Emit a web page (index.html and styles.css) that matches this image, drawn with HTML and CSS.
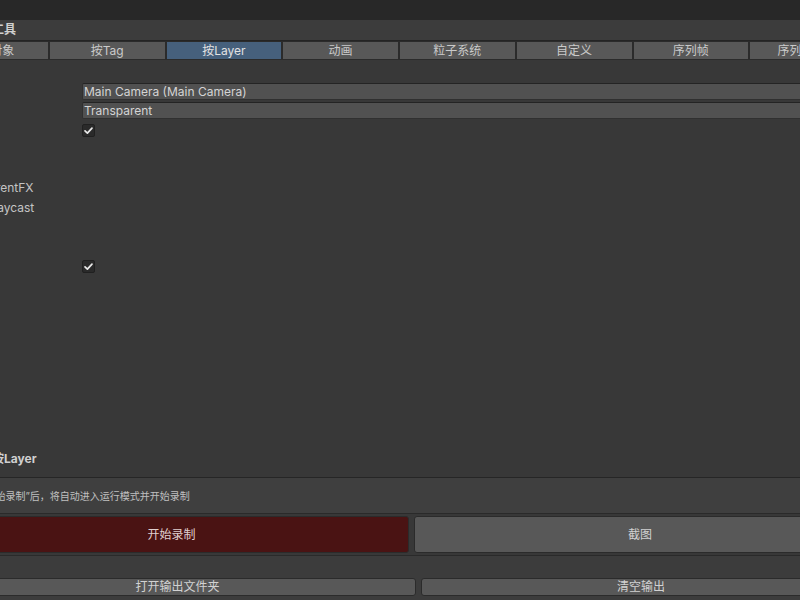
FILE: index.html
```html
<!DOCTYPE html>
<html lang="zh-CN">
<head>
<meta charset="utf-8">
<title>动画录制工具</title>
<link rel="stylesheet" href="styles.css">
</head>
<body>
<div class="window">
  <div class="topbar"></div>
  <div class="header">动画录制工具</div>
  <div class="tabs">
    <div class="tab">指定对象</div>
    <div class="tab">按Tag</div>
    <div class="tab active">按Layer</div>
    <div class="tab">动画</div>
    <div class="tab">粒子系统</div>
    <div class="tab">自定义</div>
    <div class="tab">序列帧</div>
    <div class="tab">序列帧导出</div>
  </div>
  <div class="main">
    <div class="row field-row">
      <span class="label">录制相机</span>
      <div class="field">Main Camera (Main Camera)</div>
    </div>
    <div class="row field-row">
      <span class="label">背景</span>
      <div class="field">Transparent</div>
    </div>
    <div class="row toggle-row">
      <span class="label">递归</span>
      <span class="checkbox"><svg viewBox="0 0 13 13" width="13" height="13"><polyline points="3,6.8 5.4,9.2 10,4.2" fill="none" stroke="#e8e8e8" stroke-width="1.7" stroke-linecap="round" stroke-linejoin="round"/></svg></span>
    </div>
    <div class="layers">
      <div class="layer">Default</div>
      <div class="layer">TransparentFX</div>
      <div class="layer">Ignore Raycast</div>
      <div class="layer">Water</div>
      <div class="layer">UI</div>
    </div>
    <div class="row toggle-row last">
      <span class="label">全选</span>
      <span class="checkbox"><svg viewBox="0 0 13 13" width="13" height="13"><polyline points="3,6.8 5.4,9.2 10,4.2" fill="none" stroke="#e8e8e8" stroke-width="1.7" stroke-linecap="round" stroke-linejoin="round"/></svg></span>
    </div>
    <div class="mode">模式：按Layer</div>
  </div>
  <div class="help">点击“开始录制”后，将自动进入运行模式并开始录制</div>
  <div class="actions">
    <div class="btn big record">开始录制</div>
    <div class="btn big shot">截图</div>
  </div>
  <div class="footer">
    <div class="btn small open">打开输出文件夹</div>
    <div class="btn small clear">清空输出</div>
  </div>
</div>
</body>
</html>
```

FILE: styles.css
```css
html, body {
  margin: 0;
  padding: 0;
  width: 800px;
  height: 600px;
  overflow: hidden;
  background: #383838;
}

.window {
  width: 934px;
  height: 600px;
  margin-left: -67px;
  display: flex;
  flex-direction: column;
  font-family: Inter, "Noto Sans CJK SC", sans-serif;
  font-size: 12px;
  color: #c4c4c4;
  background: #383838;
}

.topbar {
  height: 20px;
  flex: none;
  background: #282828;
}

.header {
  height: 20px;
  flex: none;
  line-height: 20px;
  padding-left: 11px;
  background: #3c3c3c;
  font-weight: bold;
  color: #d0d0d0;
}

.tabs {
  height: 20px;
  flex: none;
  box-sizing: border-box;
  border-top: 1px solid #242424;
  display: flex;
  margin-left: -1px;
  margin-right: 1px;
  background: #2c2c2c;
}

.tab {
  flex: 1;
  height: 19px;
  box-sizing: border-box;
  border: 1px solid #2b2b2b;
  background: #585858;
  text-align: center;
  line-height: 17px;
  color: #cacaca;
  white-space: nowrap;
}

.tab.active {
  background: #46607c;
  color: #e2e2e2;
}

.main {
  flex: none;
  height: 417px;
  box-sizing: border-box;
  padding-top: 23px;
  display: flex;
  flex-direction: column;
}

.row {
  display: flex;
  align-items: center;
}

.label {
  width: 132px;
  padding-left: 17px;
  flex: none;
  white-space: nowrap;
}

.field-row {
  height: 17px;
  margin-bottom: 2px;
}

.field {
  flex: 1;
  height: 17px;
  box-sizing: border-box;
  margin-right: 4px;
  border: 1px solid #303030;
  border-top-color: #242424;
  border-radius: 2px;
  background: #515151;
  color: #d4d4d4;
  line-height: 15px;
  padding-left: 1px;
}

.toggle-row {
  height: 18px;
}

.toggle-row.last {
  height: 16px;
}

.checkbox {
  width: 13px;
  height: 13px;
  box-sizing: border-box;
  border: 1px solid #202020;
  border-radius: 2px;
  background: #2a2a2a;
  display: flex;
  align-items: center;
  justify-content: center;
}

.checkbox svg {
  display: block;
  flex: none;
}

.layers {
  margin-top: 19px;
  padding-left: 17px;
}

.layer {
  height: 20px;
  line-height: 20px;
  white-space: nowrap;
}

.mode {
  margin-top: auto;
  height: 20px;
  line-height: 20px;
  margin-bottom: 8px;
  padding-left: 23px;
  font-weight: bold;
  color: #d0d0d0;
}

.help {
  flex: none;
  height: 37px;
  box-sizing: border-box;
  border-top: 1px solid #262626;
  border-bottom: 1px solid #2a2a2a;
  background: #3f3f3f;
  font-size: 10px;
  line-height: 36px;
  padding-left: 28px;
  color: #c0c0c0;
  white-space: nowrap;
}

.actions {
  flex: none;
  display: flex;
  gap: 5px;
  padding: 2px 1px 2px 1px;
  border-bottom: 1px solid #2a2a2a;
}

.btn {
  box-sizing: border-box;
  border: 1px solid #2b2b2b;
  border-radius: 3px;
  background: #585858;
  color: #d2d2d2;
  text-align: center;
  white-space: nowrap;
}

.btn.big {
  height: 37px;
  line-height: 35px;
}

.btn.record {
  width: 475px;
  background: #4a1313;
  color: #e0d0d0;
}

.btn.shot {
  width: 452px;
}

.footer {
  flex: 1;
  display: flex;
  gap: 5px;
  padding: 22px 6px 0 6px;
  background: #3c3c3c;
}

.btn.small {
  height: 18px;
  line-height: 16px;
}

.btn.open {
  width: 477px;
}

.btn.clear {
  width: 440px;
}
```
